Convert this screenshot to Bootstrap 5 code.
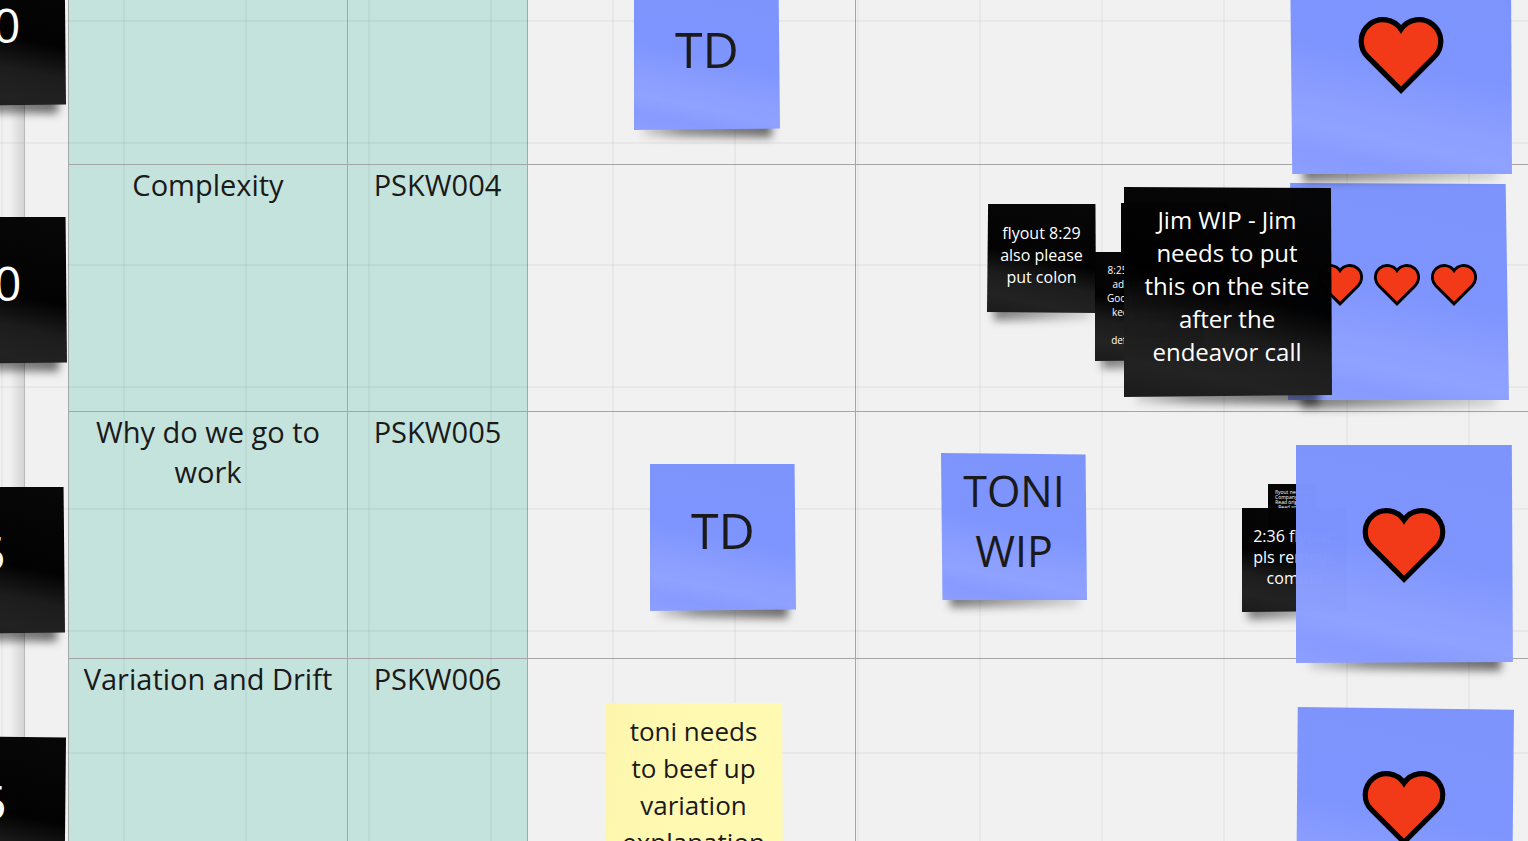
<!DOCTYPE html>
<html lang="en">
<head>
<meta charset="utf-8">
<meta name="viewport" content="width=device-width, initial-scale=1">
<title>Course board</title>
<link href="https://cdn.jsdelivr.net/npm/bootstrap@5.3.0/dist/css/bootstrap.min.css" rel="stylesheet">
<style>
body { font-family: "Open Sans", "Noto Sans", sans-serif; color: #1a1a1a; background: #f1f1f1; }
.board { isolation: isolate; }

/* canvas grid, drawn faintly over the table */
.canvas-grid {
  background:
    repeating-linear-gradient(90deg, transparent 0 1px, rgba(0,0,0,.04) 1px 3px, transparent 3px 8%),
    repeating-linear-gradient(180deg, rgba(0,0,0,.04) 0 2px, transparent 2px 122px) 0 20px;
}
.frame-edge { width: 25px; border-right: 1px solid #b9b9b9; background: linear-gradient(90deg, transparent 40%, rgba(0,0,0,.12)); }

/* planning table */
.plan-wrap { padding-left: 68px; }
.plan { table-layout: fixed; border-collapse: separate; border-spacing: 0; font-size: 29px; line-height: 40px; }
.plan td, .plan th { border: 0 solid #a6a6a6; border-width: 0 1px 1px 0; padding: 0 10px; font-weight: 400; vertical-align: top; text-align: center; }
.plan th:first-child { border-left-width: 1px; }
.plan td:last-child { border-right-width: 0; }
.plan tr:last-child > * { border-bottom-width: 0; }
.plan .tinted { background: #c4e3dc; }
.col-topic { width: 280px; } .col-code { width: 180px; } .col-draft { width: 328px; }
.row-first { height: 165px; } .row-std { height: 247px; }

/* sticky notes */
.sticky { position: absolute; isolation: isolate; display: flex; flex-direction: column; align-items: center; justify-content: center; text-align: center; white-space: nowrap; --shape: polygon(0 0, 99% 0, 100% 99%, 0 100%); }
.sticky::after { content: ""; position: absolute; inset: 0; z-index: -1; background: var(--paper); clip-path: var(--shape); opacity: .99; }
.sticky::before { content: ""; position: absolute; left: 6%; right: 6%; bottom: -7px; height: 24px; z-index: -2; background: linear-gradient(90deg, rgba(0,0,0,.1), rgba(0,0,0,.4) 30%, rgba(0,0,0,.55)); filter: blur(4px); transform: rotate(.5deg); }
.curl-left::before { background: linear-gradient(270deg, rgba(0,0,0,.1), rgba(0,0,0,.35) 60%, rgba(0,0,0,.5)); transform: rotate(-.5deg); }
.sticky-blue { --paper: linear-gradient(192deg, #7c93fd 0 12%, #7d94ff 50%, #8a9dff 68%, #8fa1ff 80%, #879aff 90%, #8c9fff); }
.sticky-black { color: #fff; --paper: linear-gradient(192deg, #050505, #000 50%, #1a1a1a 68%, #212121 85%, #191919); }
.sticky-yellow { --paper: linear-gradient(100deg, #fdf5ab, #fff9b1 40%); }
.size-s { width: 146px; height: 147px; padding-bottom: 16px; font-size: 50px; line-height: 60px; }
.size-l { width: 218px; height: 218px; }
.heart { width: 86px; height: 77px; }
.heart-sm { width: 46px; height: 42px; }

.n-zero-a { left: -80px; top: -41px; font-size: 48px; }
.n-zero-b { left: -79px; top: 217px; font-size: 48px; }
.n-five-a { left: -81px; top: 487px; font-size: 48px; }
.n-five-b { left: -80px; top: 736px; font-size: 48px; --shape: polygon(0 0, 100% 1%, 99% 100%, 0 100%); }
.n-td-a { left: 634px; top: -17px; }
.n-td-b { left: 650px; top: 464px; }
.n-toni { left: 941px; top: 453px; font-size: 43px; padding-bottom: 12px; --shape: polygon(0 0, 99% 1%, 100% 100%, 1% 100%); }
.n-heart-a { left: 1290px; top: -48px; width: 222px; height: 222px; padding-bottom: 16px; --shape: polygon(0 0, 99.5% 0, 100% 100%, 1% 100%); }
.n-heart-b { left: 1288px; top: 183px; width: 221px; gap: 11px; flex-direction: row; padding-bottom: 14px; padding-right: 4px; --shape: polygon(1% 0, 98.5% .5%, 100% 99.5%, 0 99.5%); }
.n-heart-c { left: 1296px; top: 445px; padding-right: 2px; padding-bottom: 17px; --shape: polygon(0 0, 99% 0, 99.5% 99.5%, 0 100%); }
.n-heart-d { left: 1296px; top: 707px; padding-right: 2px; padding-bottom: 15px; --shape: polygon(.8% 0, 100% 1.3%, 99% 100%, 0 100%); }
.n-heart-c .heart, .n-heart-d .heart { width: 84px; height: 75px; }
.n-yellow { left: 606px; top: 703px; width: 177px; height: 210px; justify-content: flex-start; padding-top: 10px; padding-right: 2px; font-size: 26px; line-height: 37px; --shape: polygon(0 0, 99.5% 0, 100% 100%, 0 100%); }
.n-jim { left: 1124px; top: 187px; width: 208px; height: 210px; padding-bottom: 13px; padding-right: 2px; font-size: 24px; line-height: 33px; --shape: polygon(0 0, 99.5% .5%, 100% 99%, 0 100%); }
.n-flyout { left: 987px; top: 204px; width: 109px; height: 109px; padding-bottom: 7px; font-size: 16px; line-height: 22px; --shape: polygon(1% 0, 99.5% 0, 100% 100%, 0 99%); }
.n-behind { left: 1121px; top: 203px; width: 108px; height: 108px; }
.n-good { left: 1095px; top: 252px; width: 109px; height: 109px; padding-right: 2px; padding-bottom: 4px; font-size: 10px; line-height: 14px; font-weight: 500; }
.n-remove { left: 1242px; top: 508px; width: 105px; height: 104px; padding-bottom: 5px; font-size: 16px; line-height: 21px; }
.n-tiny { left: 1268px; top: 484px; width: 49px; height: 49px; justify-content: flex-start; padding-top: 6px; font-size: 5px; line-height: 5px; }
</style>
</head>
<body>
<svg width="0" height="0" class="position-absolute" aria-hidden="true">
  <symbol id="heart" viewBox="0 0 257 234"><path d="M128.5 222.4 26.8 120.7A66 66 0 1 1 128.5 37.5 66 66 0 1 1 230.2 120.7Z" fill="#f23a18" stroke="#000" stroke-width="16" stroke-miterlimit="6"/></symbol>
</svg>
<main class="board position-relative vh-100 w-100 overflow-hidden">
  <div class="plan-wrap h-100">
    <table class="plan w-100 h-100">
      <colgroup><col class="col-topic"><col class="col-code"><col class="col-draft"><col></colgroup>
      <tbody>
        <tr class="row-first"><th class="tinted"></th><td class="tinted"></td><td></td><td></td></tr>
        <tr class="row-std"><th scope="row" class="tinted">Complexity</th><td class="tinted">PSKW004</td><td></td><td></td></tr>
        <tr class="row-std"><th scope="row" class="tinted">Why do we go to work</th><td class="tinted">PSKW005</td><td></td><td></td></tr>
        <tr><th scope="row" class="tinted">Variation and Drift</th><td class="tinted">PSKW006</td><td></td><td></td></tr>
      </tbody>
    </table>
  </div>
  <div class="canvas-grid position-absolute top-0 start-0 w-100 h-100"></div>
  <div class="frame-edge position-absolute top-0 start-0 h-100"></div>

  <div class="sticky sticky-black size-s n-zero-a"><span>10</span></div>
  <div class="sticky sticky-black size-s n-zero-b"><span>10</span></div>
  <div class="sticky sticky-black size-s n-five-a"><span>5</span></div>
  <div class="sticky sticky-black size-s n-five-b"><span>5</span></div>

  <div class="sticky sticky-blue size-s n-td-a"><span>TD</span></div>
  <div class="sticky sticky-blue size-s n-td-b"><span>TD</span></div>
  <div class="sticky sticky-blue size-s curl-left n-toni"><span>TONI</span><span>WIP</span></div>
  <div class="sticky sticky-yellow n-yellow"><span>toni needs</span><span>to beef up</span><span>variation</span><span>explanation</span></div>

  <div class="sticky sticky-blue curl-left size-l n-heart-b">
    <svg class="heart-sm" role="img" aria-label="Heart"><use href="#heart"/></svg>
    <svg class="heart-sm" role="img" aria-label="Heart"><use href="#heart"/></svg>
    <svg class="heart-sm" role="img" aria-label="Heart"><use href="#heart"/></svg>
  </div>
  <div class="sticky sticky-blue curl-left n-heart-a"><svg class="heart" role="img" aria-label="Heart"><use href="#heart"/></svg></div>

  <div class="sticky sticky-black curl-left n-flyout"><span>flyout 8:29</span><span>also please</span><span>put colon</span></div>
  <div class="sticky sticky-black n-behind"></div>
  <div class="sticky sticky-black curl-left n-good"><span>8:25 flyout please</span><span>add commas to</span><span>Good intentions...</span><span>keep consistent</span><span>with the</span><span>definitions prior</span></div>
  <div class="sticky sticky-black n-jim"><span>Jim WIP - Jim</span><span>needs to put</span><span>this on the site</span><span>after the</span><span>endeavor call</span></div>

  <div class="sticky sticky-black n-tiny"><span>flyout needs to</span><span>Company Logo</span><span>Read original a</span><span>Read source</span></div>
  <div class="sticky sticky-black curl-left n-remove"><span>2:36 flyout:</span><span>pls remove</span><span>comma</span></div>
  <div class="sticky sticky-blue size-l n-heart-c"><svg class="heart" role="img" aria-label="Heart"><use href="#heart"/></svg></div>
  <div class="sticky sticky-blue size-l n-heart-d"><svg class="heart" role="img" aria-label="Heart"><use href="#heart"/></svg></div>
</main>
<script src="https://cdn.jsdelivr.net/npm/bootstrap@5.3.0/dist/js/bootstrap.bundle.min.js"></script>
</body>
</html>
